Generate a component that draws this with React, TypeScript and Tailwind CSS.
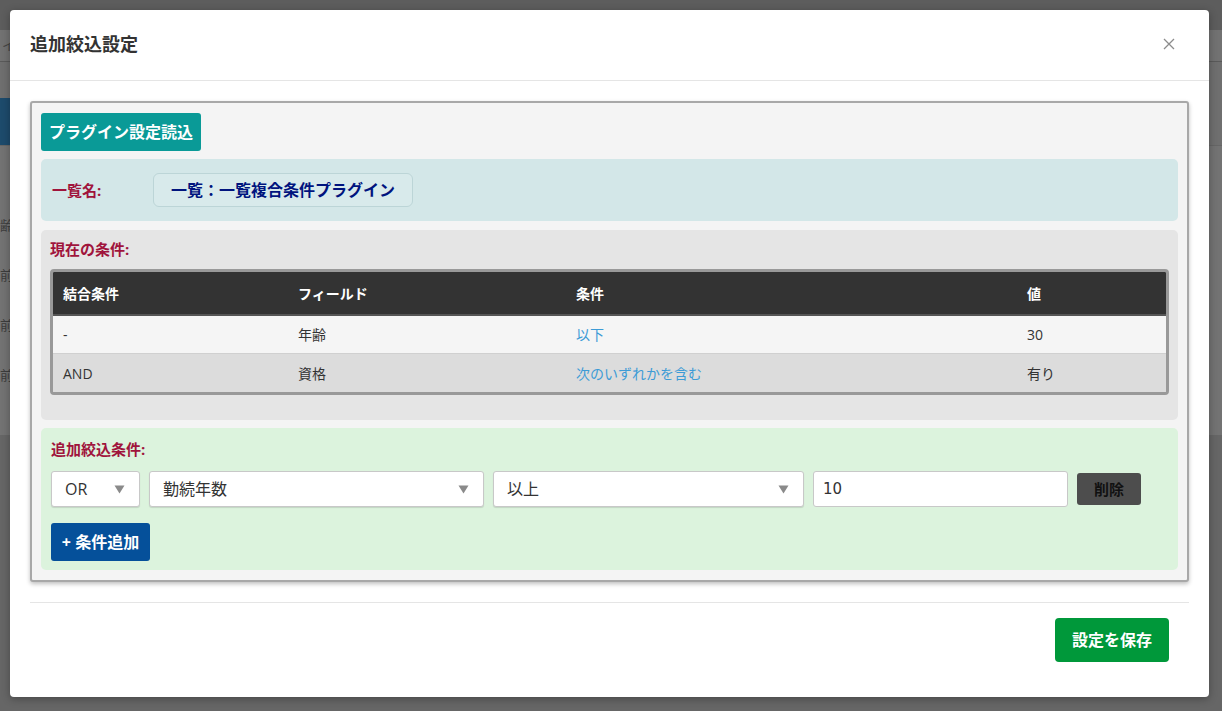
import React from "react";

const jp = { fontFamily: '"Open Sans", "Noto Sans CJK JP", sans-serif' };

function Caret() {
  return (
    <svg width="11" height="9" viewBox="0 0 11 9" className="shrink-0">
      <path d="M0.5 0.5 L10.5 0.5 L5.5 8.5 Z" fill="#8a8a8a" />
    </svg>
  );
}

function Select({ label, className }: { label: string; className: string }) {
  return (
    <div
      className={`h-[36px] bg-white border border-[#c8c8c8] rounded-[3px] shadow-[0_1px_1px_rgba(0,0,0,0.12)] flex items-center justify-between pl-[13px] pr-[14px] text-[16px] text-[#333] ${className}`}
    >
      <span>{label}</span>
      <Caret />
    </div>
  );
}

export default function App() {
  const rows = [
    { a: "-", b: "年齢", c: "以下", d: "30", bg: "bg-[#f5f5f5]" },
    { a: "AND", b: "資格", c: "次のいずれかを含む", d: "有り", bg: "bg-[#dcdcdc]" },
  ];
  return (
    <div className="relative w-[1222px] h-[711px] overflow-hidden bg-[#666]" style={jp}>
      {/* dimmed page behind */}
      <div className="flex flex-col w-full h-full">
        <div className="h-[30px] bg-[#5d5d5d]" />
        <div className="h-[32px] bg-[#727272] border-b border-[#5a5a5a] text-[#444] text-[13px] pl-[2px] pt-[6px]">イ</div>
        <div className="h-[36px] bg-[#6f6f6f]" />
        <div className="h-[47px] bg-[#6f6f6f] flex">
          <div className="w-[12px] bg-[#1d4b6c]" />
        </div>
        <div className="h-[290px] bg-[#737373] border-t border-[#666] flex flex-col text-[13px] text-[#3c3c3c]">
          <div className="h-[70px]" />
          <div className="h-[50px]">齢</div>
          <div className="h-[50px]">前</div>
          <div className="h-[50px]">前</div>
          <div className="h-[50px]">前</div>
        </div>
        <div className="flex-1 bg-[#666]" />
      </div>

      {/* modal */}
      <div className="absolute left-[10px] top-[10px] w-[1199px] h-[687px] bg-white rounded-[4px] flex flex-col shadow-[0_2px_8px_rgba(0,0,0,0.3)]">
        <div className="h-[71px] border-b border-[#e5e5e5] flex items-center justify-between pl-[20px] pr-[34px] shrink-0">
          <div className="text-[18px] font-bold text-[#333] pb-[2px]">追加絞込設定</div>
          <svg width="12" height="12" viewBox="0 0 12 12" className="mb-[2px]">
            <path d="M1 1 L11 11 M11 1 L1 11" stroke="#8c8c8c" strokeWidth="1.3" />
          </svg>
        </div>

        <div className="px-[20px] pt-[20px]">
          <div className="border-2 border-[#a8a8a8] rounded-[3px] bg-[#f4f4f4] shadow-[0_2px_4px_rgba(0,0,0,0.25)] px-[9px] pt-[10px] pb-[10px] flex flex-col">
            <div>
              <button className="h-[38px] w-[160px] bg-[#0a9a97] rounded-[3px] text-white font-bold text-[16px]">
                プラグイン設定読込
              </button>
            </div>

            <div className="mt-[8px] h-[62px] bg-[#d3e7e8] rounded-[5px] flex items-center pl-[11px]">
              <div className="w-[101px] text-[#a0143c] font-bold text-[15px]">一覧名:</div>
              <div className="h-[34px] px-[17px] border border-[#bcd5d7] bg-[#d8eaeb] rounded-[6px] flex items-center text-[16px] font-bold text-[#00147e]">
                一覧：一覧複合条件プラグイン
              </div>
            </div>

            <div className="mt-[9px] h-[190px] bg-[#e5e5e5] rounded-[5px] px-[9px] pt-[8px]">
              <div className="text-[#a0143c] font-bold text-[15px] h-[31px] flex items-start">現在の条件:</div>
              <div className="border-[3px] border-[#999] rounded-[4px] overflow-hidden">
                <div className="h-[44px] bg-[#333] flex items-center text-white font-bold text-[14px] border-b-[2px] border-[#555]">
                  <div className="w-[245px] pl-[10px]">結合条件</div>
                  <div className="w-[278px]">フィールド</div>
                  <div className="w-[451px]">条件</div>
                  <div className="flex-1">値</div>
                </div>
                {rows.map((r, i) => (
                  <div
                    key={i}
                    className={`h-[38px] ${r.bg} flex items-center text-[14px] text-[#333] ${i === 0 ? "border-b border-[#d0d0d0]" : ""}`}
                  >
                    <div className="w-[245px] pl-[10px]">{r.a}</div>
                    <div className="w-[278px]">{r.b}</div>
                    <div className="w-[451px] text-[#3d9bd6]">{r.c}</div>
                    <div className="flex-1">{r.d}</div>
                  </div>
                ))}
              </div>
            </div>

            <div className="mt-[8px] h-[142px] bg-[#dcf3dd] rounded-[5px] px-[10px] pt-[10px]">
              <div className="text-[#a0143c] font-bold text-[15px] h-[33px] flex items-start">追加絞込条件:</div>
              <div className="flex items-center gap-[9px]">
                <Select label="OR" className="w-[89px]" />
                <Select label="勤続年数" className="w-[335px]" />
                <Select label="以上" className="w-[311px]" />
                <div className="h-[36px] w-[255px] bg-white border border-[#c8c8c8] rounded-[3px] flex items-center pl-[9px] text-[#333]" style={{ fontFamily: '"DejaVu Sans", sans-serif', fontSize: 15 }}>
                  10
                </div>
                <button className="h-[32px] w-[64px] bg-[#4d4d4d] rounded-[3px] text-[#111] font-bold text-[15px]">削除</button>
              </div>
              <div className="mt-[16px]">
                <button className="h-[38px] w-[99px] bg-[#05509a] rounded-[3px] text-white font-bold text-[16px]">
                  + 条件追加
                </button>
              </div>
            </div>
          </div>
        </div>

        <div className="mx-[20px] mt-[20px] border-t border-[#e5e5e5] flex justify-end pt-[15px] pr-[20px]">
          <button className="h-[44px] w-[114px] bg-[#00983a] rounded-[4px] text-white font-bold text-[16px]">設定を保存</button>
        </div>
      </div>
    </div>
  );
}
